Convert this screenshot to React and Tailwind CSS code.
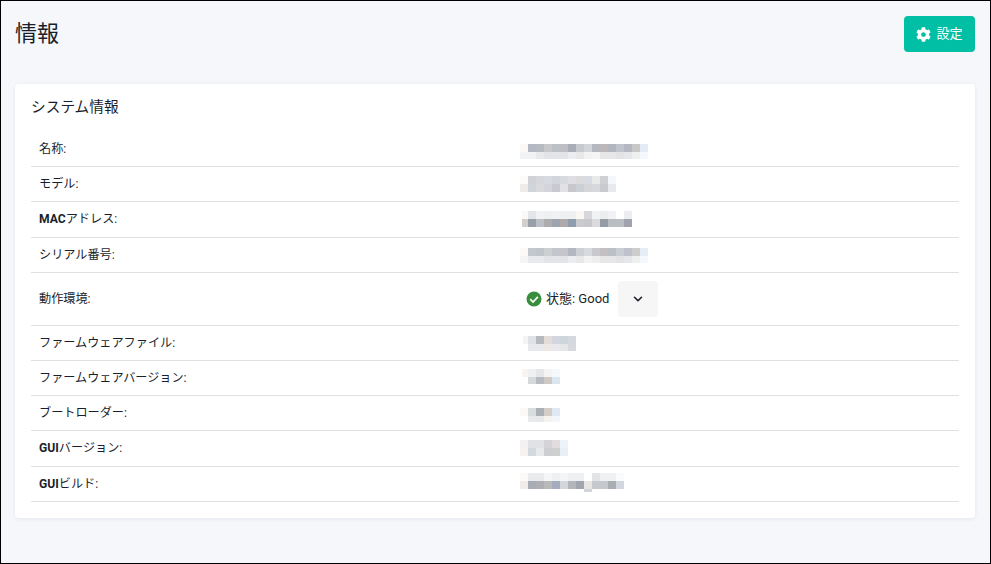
import React from 'react';
import { FaCog } from 'react-icons/fa';
import { ChevronDown } from 'lucide-react';

// blurred values: each row of the mosaic is [y, height, colours], cells are 8px wide
const SERIAL = [
  [10, 8, ['#fcf9f6', '#c3c7d0', '#c2c4cb', '#cdcfd2', '#c3c6cc', '#c4c6cb', '#b3b7c1', '#cfd0d3', '#d7dadf', '#c7c9cf', '#c4c0c2', '#bdbfc7', '#c9cdd5', '#bfc2cc', '#cecccd', '#e5edf7']],
  [18, 7, ['#f5f5f5', '#e8eaee', '#e9eaeb', '#e3e4e8', '#e4e5e8', '#e3e4e7', '#ecedf0', '#e8e8e9', '#f3f3f4', '#eeeeef', '#e7e7e8', '#e7e7e8', '#e3e2e4', '#e5e7ea', '#efefef', '#f5f8fc']],
];

const ROWS = [
  { label: '名称:', h: 'h-[35px]', blur: [
    [12, 8, ['#fbf8f5', '#b3b8c3', '#b8bac2', '#c6c8cc', '#bcc0c7', '#bdbfc5', '#a9adb8', '#c9cacd', '#d2d6db', '#b5b8c0', '#bcb8ba', '#b3b5bf', '#bfc4cd', '#b5b8c3', '#c9c7c8', '#e3ebf6']],
    [20, 7, ['#f2f3f4', '#f2f3f4', '#e9eaeb', '#e3e4e8', '#e4e5e8', '#e3e4e7', '#ecedf0', '#e8e8e9', '#f3f3f4', '#f5f5f6', '#e7e7e8', '#e7e7e8', '#e3e2e4', '#e5e7ea', '#efefef', '#f5f8fc']],
  ] },
  { label: 'モデル:', h: 'h-[35px]', blur: [
    [9, 8, ['#fdfbfa', '#d0d2d8', '#d6d7db', '#d7dae0', '#d2d5da', '#d7dadf', '#dfdee2', '#dcdbdb', '#d8dbe4', '#e9e9e9', '#cfd0d3', '#f4f7fb']],
    [17, 8, ['#efebe8', '#d0d5dc', '#dadadd', '#d4d5da', '#c9cad1', '#e2e2e6', '#c8c8cb', '#cbd0d6', '#d6d6da', '#d8d8dc', '#c9cad0', '#e8e9ee']],
  ] },
  { latin: 'MAC', label: 'アドレス:', h: 'h-[36px]', blur: [
    [9, 8, ['#fbf9f8', '#e3e5e8', '#f1f2f4', '#eff0f1', '#f1f2f4', '#eff0f2', '#eff0f2', '#faf7f5', '#d7d7da', '#f1f2f4', '#ecedef', '#f0f2f5', '#ffffff', '#ecedf0']],
    [17, 8, ['#d4cfcc', '#9aa0aa', '#bcc0c6', '#aeadae', '#a0a4b0', '#aeaaab', '#909dad', '#c9cbce', '#c6c8cc', '#dadadf', '#979ba5', '#b9bec2', '#b9bec2', '#a0a3ae']],
  ], x: 2, first: 6 },
  { label: 'シリアル番号:', h: 'h-[35px]', blur: SERIAL },
  { label: '動作環境:', h: 'h-[53px]', status: true },
  { label: 'ファームウェアファイル:', h: 'h-[35px]', blur: [
    [10, 8, ['#f5f3f3', '#dfe3e6', '#b8b9be', '#e3dcd8', '#d3d5df', '#cdd6d8', '#d6d8df']],
    [18, 7, ['#ffffff', '#e8e9ec', '#e8e9ec', '#ede8e5', '#e8e8ed', '#e4e6e8', '#d8d9df']],
  ], x: 3, first: 5 },
  { label: 'ファームウェアバージョン:', h: 'h-[35px]', blur: [
    [8, 8, ['#f7f4f2', '#eff0f1', '#e5e6e8', '#f6f4f2', '#f6f9fc']],
    [16, 7, ['#ffffff', '#d5d9dc', '#b7bac0', '#cfc9c5', '#dce6f0']],
  ], x: 2, first: 6 },
  { label: 'ブートローダー:', h: 'h-[35px]', blur: [
    [12, 8, ['#fbf8f6', '#d8dde0', '#adafb6', '#d4cdc8', '#e0e9f3']],
    [20, 6, ['#ffffff', '#e9eaec', '#e8e9eb', '#f6f2ef', '#f3f7fc']],
  ] },
  { latin: 'GUI', label: 'バージョン:', h: 'h-[36px]', blur: [
    [9, 8, ['#f3f1f2', '#e0e2e6', '#e1e2e5', '#d4d4d8', '#e2dddc', '#edf3fa']],
    [17, 8, ['#f7f2ef', '#d2d9df', '#e7e9ea', '#cdced2', '#d0cfcf', '#e8eff7']],
  ] },
  { latin: 'GUI', label: 'ビルド:', h: 'h-[35px]', blur: [
    [6, 8, ['#fcfaf9', '#e9ebec', '#e9ebec', '#f6f6f6', '#eef0f2', '#f5f5f6', '#eef0f1', '#eff0f2', '#ffffff', '#e3e4e6', '#f0f1f2', '#f0f1f2', '#fbfbfc']],
    [14, 8, ['#f1ecea', '#a7acb5', '#adafb3', '#b8bab9', '#a4acbd', '#d5d6da', '#b3b7bc', '#a1a6ae', '#e9e5e2', '#c6cace', '#c5c9cc', '#a9aeb1', '#d3d6de']],
    [22, 3, [null, null, null, null, null, null, null, null, '#d2d4dd']],
  ] },
];

const Mosaic = ({ rows, x = 0, first = 8 }) => (
  <svg width="140" height="34" shapeRendering="crispEdges" className="block self-start">
    {rows.map(([y, h, cells]) =>
      cells.map((fill, i) =>
        fill ? (
          <rect
            key={`${y}-${i}`}
            x={i === 0 ? x : x + first + (i - 1) * 8}
            y={y}
            width={i === 0 ? first : 8}
            height={h}
            fill={fill}
          />
        ) : null
      )
    )}
  </svg>
);

const CheckCircle = () => (
  <svg width="16" height="16" viewBox="0 0 16 16" className="block shrink-0">
    <circle cx="8" cy="8" r="7.5" fill="#388e3c" />
    <path d="M4.2 8.2 L7 11 L11.9 5.8" fill="none" stroke="#fff" strokeWidth="1.7" />
  </svg>
);

const Status = () => (
  <div className="flex items-center pl-[6px] text-[13px] text-[#1a1f2c]">
    <CheckCircle />
    <span className="ml-1 font-normal">状態: Good</span>
    <button className="ml-[9px] w-10 h-9 flex items-center justify-center rounded bg-[#f6f6f6] text-[#1a1f2c]">
      <ChevronDown size={14} strokeWidth={2.75} />
    </button>
  </div>
);

export default function App() {
  return (
    <div className="w-[991px] h-[564px] overflow-hidden border border-black bg-[#f5f7fb] pl-[14px] pr-[15px] pt-[15px] font-['Roboto','Noto_Sans_CJK_JP',sans-serif] text-[#1a1f2c]">
      <div className="flex items-start justify-between">
        <h1 className="text-[22px] leading-9 font-normal">情報</h1>
        <button className="flex items-center h-9 w-[71px] justify-center gap-[5px] rounded bg-[#00bfa5] text-white text-[13px]">
          <FaCog size={15} />
          <span>設定</span>
        </button>
      </div>
      <div className="mt-8 h-[434px] rounded bg-white px-4 pt-[12px] shadow-[0_1px_4px_rgba(30,40,80,0.08)]">
        <h2 className="text-[14.7px] leading-[22px] font-normal">システム情報</h2>
        <div className="mt-[14px]">
          {ROWS.map((row) => (
            <div key={row.label + row.latin} className={`flex items-center border-b border-[#e0e0e3] ${row.h}`}>
              <div className="w-[489px] pl-2 text-[12.15px]">
                {row.latin && <span className="font-bold">{row.latin}</span>}
                {row.label}
              </div>
              {row.status ? <Status /> : <Mosaic rows={row.blur} x={row.x} first={row.first} />}
            </div>
          ))}
        </div>
      </div>
    </div>
  );
}
